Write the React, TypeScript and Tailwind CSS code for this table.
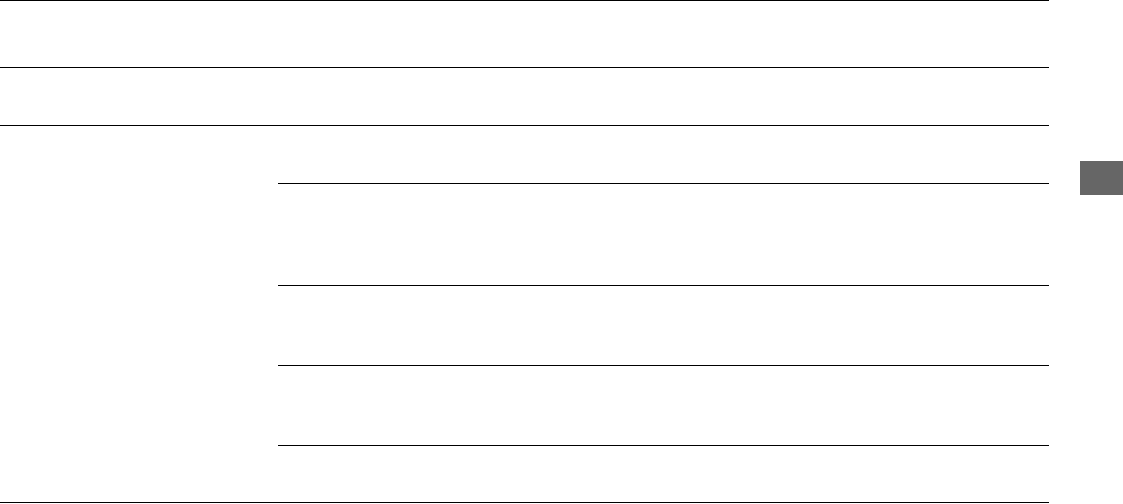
export default function App() {
  return (
    <div className="flex h-[504px] w-[1123px] bg-white">
      {/* table */}
      <div className="flex w-[1049px] flex-col">
        <div className="h-[67px] border-t border-black" />
        <div className="h-[58px] border-t border-black" />
        <div className="flex border-y border-black">
          <div className="w-[278px]" />
          <div className="flex flex-1 flex-col">
            <div className="h-[57px]" />
            <div className="h-[102px] border-t border-black" />
            <div className="h-[80px] border-t border-black" />
            <div className="h-[80px] border-t border-black" />
            <div className="h-[57px] border-t border-black" />
          </div>
        </div>
      </div>
      {/* side tab */}
      <div className="ml-[31px] mt-[161px] h-[34px] w-[43px] bg-[#666666]" />
    </div>
  )
}
